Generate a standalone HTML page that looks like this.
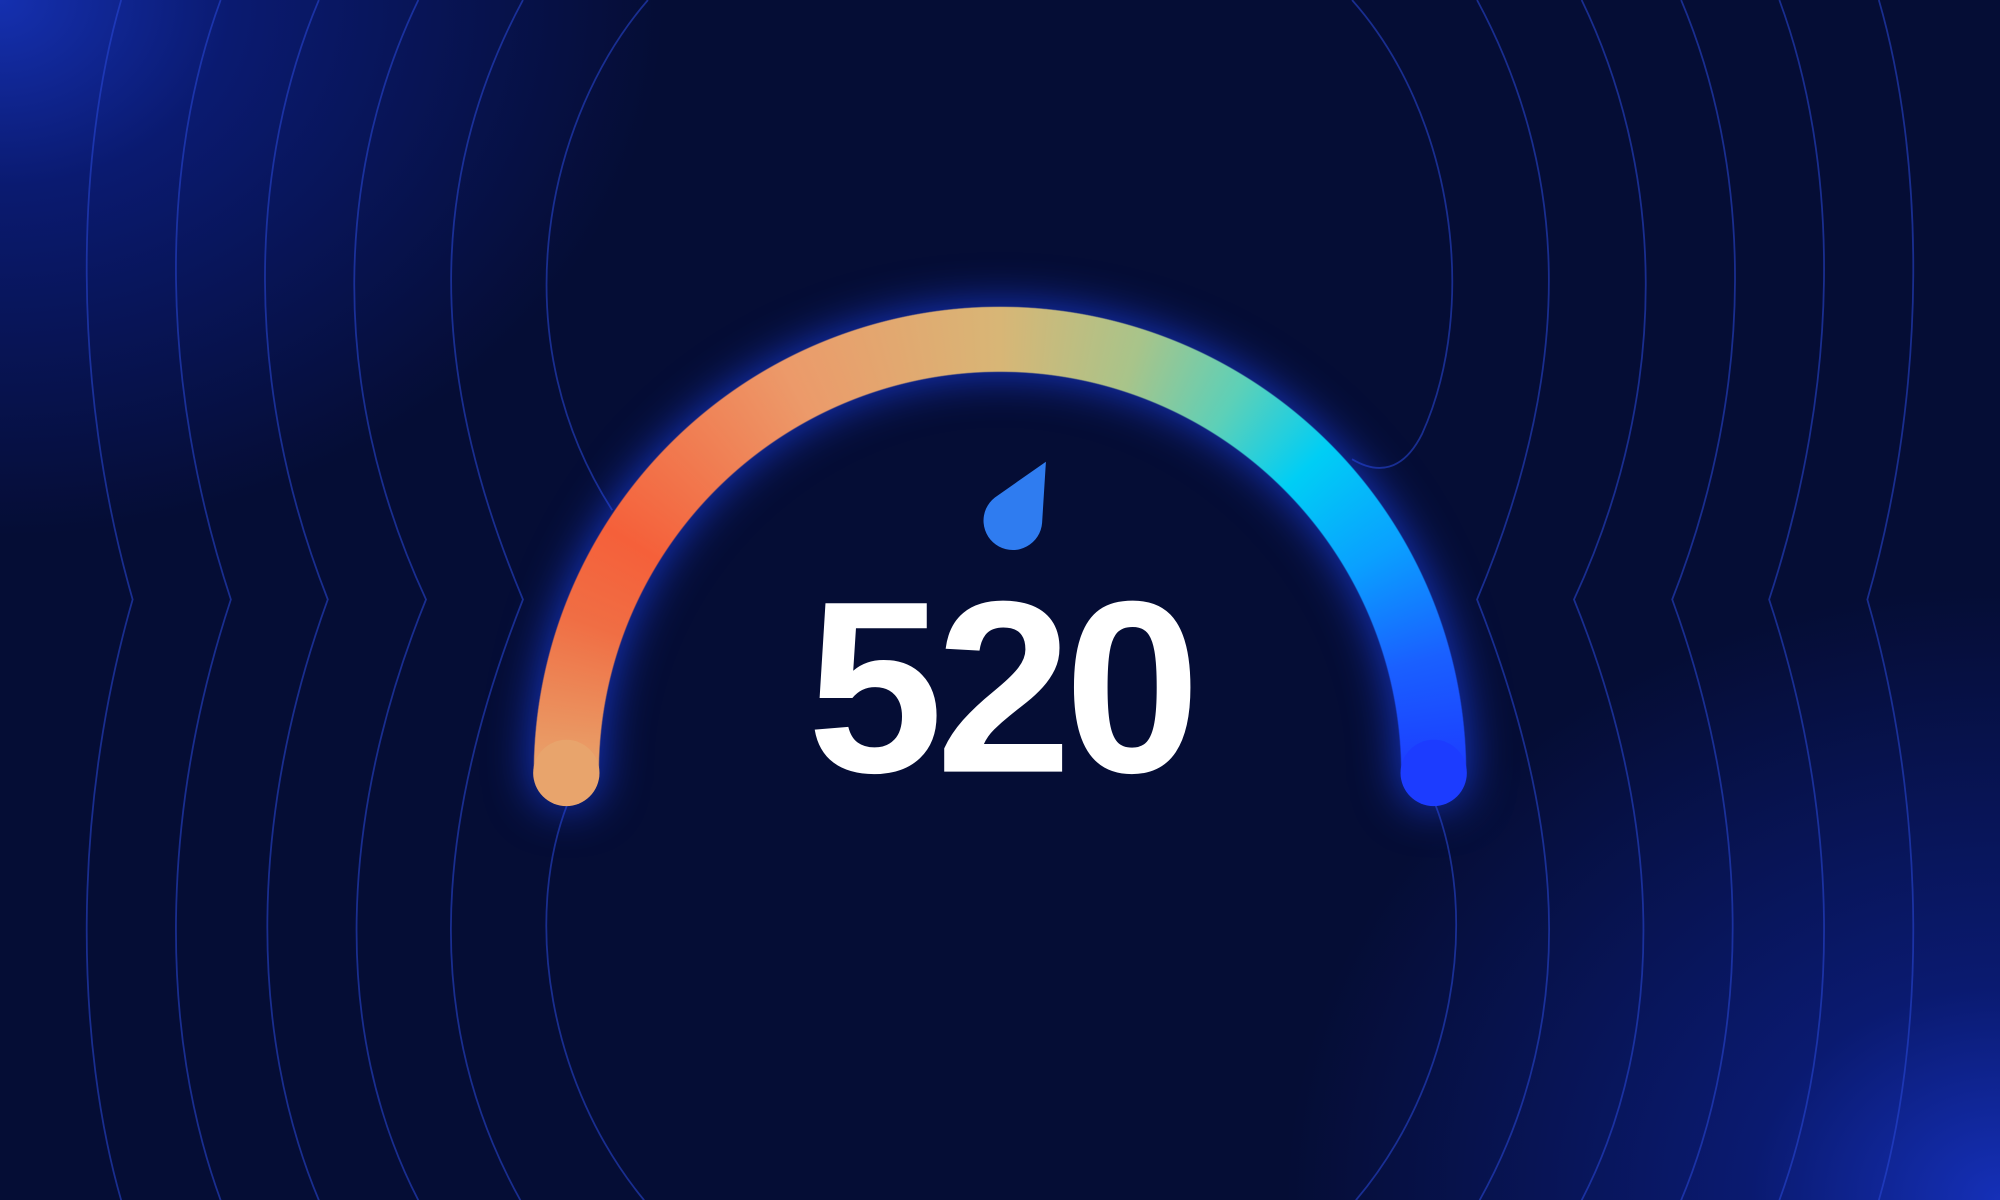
<!DOCTYPE html>
<html><head><meta charset="utf-8"><style>
html,body{margin:0;padding:0;width:2000px;height:1200px;overflow:hidden;background:#050d35}
#s{position:absolute;left:0;top:0;width:1568px;height:941px;transform:scale(1.27551,1.27551);transform-origin:0 0;
background:radial-gradient(ellipse 520px 420px at 0 0,#1530b0 0%,#0a1a70 35%,rgba(5,13,53,0) 100%),radial-gradient(ellipse 560px 480px at 1568px 941px,#1530b8 0%,#0a1a70 35%,rgba(5,13,53,0) 100%),#050d35;overflow:hidden}
svg{position:absolute;left:0;top:0}
#glow{position:absolute;left:418px;top:240px;width:732px;height:392px;filter:drop-shadow(0 0 18px rgba(30,70,255,0.75))}
#ring{position:absolute;left:0;top:0;width:732px;height:732px;border-radius:50%;
background:conic-gradient(from 270deg at 50% 50%,#e8a46c 0deg,#f06e44 20deg,#f5603a 32deg,#ec9a6a 62deg,#d8b676 90deg,#a8c48a 108deg,#5cd0b8 122deg,#00cef5 135deg,#0aa0ff 150deg,#1a60ff 165deg,#1c3cff 180deg,#1c3cff 360deg);
-webkit-mask:radial-gradient(circle,transparent 314px,#000 315px,#000 365px,transparent 366px);mask:radial-gradient(circle,transparent 314px,#000 315px,#000 365px,transparent 366px);clip-path:inset(0 0 366px 0)}
.cap{position:absolute;width:52px;height:52px;border-radius:50%;top:340px}
#t{position:absolute;left:584px;top:443px;width:400px;text-align:center;color:#fff;font:bold 192px "Liberation Sans",sans-serif;letter-spacing:-6px;line-height:192px}
</style></head><body><div id="s">
<svg width="1568" height="941" viewBox="0 0 1568 941" fill="none" stroke="#2a48d8" stroke-width="1.4" stroke-opacity="0.55">
<path d="M95,0 C60,120 55,300 104,470 C55,640 60,820 95,941"/>
<path d="M173,0 C125,130 125,300 181,470 C125,640 125,810 173,941"/>
<path d="M250,0 C195,130 190,300 257,470 C195,640 195,810 250,941"/>
<path d="M328,0 C265,130 255,300 334,470 C265,640 260,810 328,941"/>
<path d="M410,0 C340,130 330,280 410,470 C335,660 335,810 408,941"/>
<path d="M508,0 C430,90 390,260 480,400"/>
<path d="M505,941 C430,850 410,720 445,630"/>
<path d="M1473,0 C1508,120 1513,300 1464,470 C1513,640 1508,820 1473,941"/>
<path d="M1395,0 C1443,130 1443,300 1387,470 C1443,640 1443,810 1395,941"/>
<path d="M1318,0 C1373,130 1378,300 1311,470 C1373,640 1373,810 1318,941"/>
<path d="M1240,0 C1303,130 1313,300 1234,470 C1303,640 1308,810 1240,941"/>
<path d="M1158,0 C1228,130 1238,280 1158,470 C1233,660 1233,810 1160,941"/>
<path d="M1060,0 C1140,90 1160,240 1115,340 C1100,370 1080,372 1060,360"/>
<path d="M1063,941 C1140,850 1160,720 1125,630"/>
</svg>
<div id="glow"><div id="ring"></div>
<div class="cap" style="left:0;background:#e8a46c"></div>
<div class="cap" style="left:680px;background:#1c3cff"></div></div>
<svg width="1568" height="941"><path d="M780,390 L820,362 L817,410 A23,23 0 1 1 780,390 Z" fill="#2f7cf0"/></svg>
<div id="t">520</div>
</div></body></html>
